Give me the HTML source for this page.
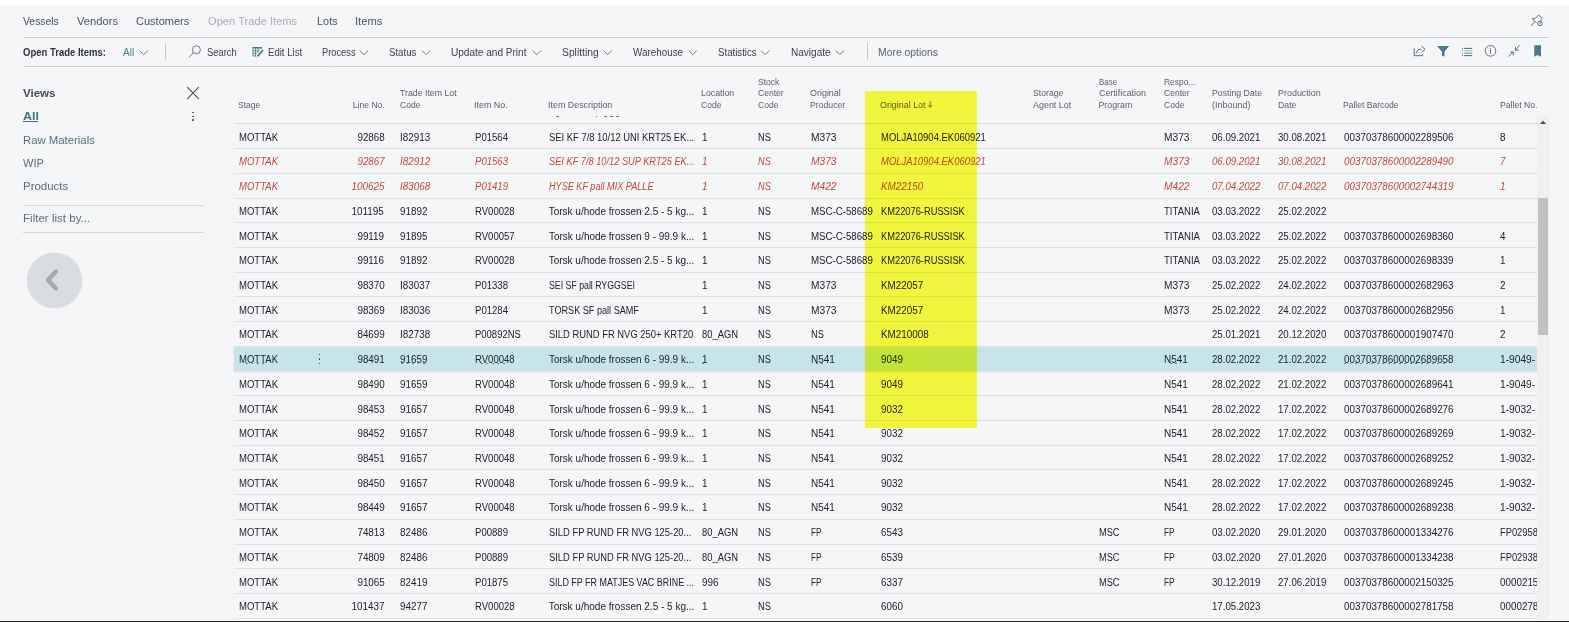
<!DOCTYPE html>
<html><head><meta charset="utf-8"><style>
html,body{margin:0;padding:0}
body{width:1569px;height:622px;overflow:hidden;background:#f5f6f8;position:relative;font-family:"Liberation Sans",sans-serif}
.t{position:absolute;white-space:nowrap;line-height:1.1172}
.r{position:absolute}
</style></head><body>
<div class="r" style="left:234px;top:345.88px;width:1303px;height:24.72px;background:#c6e4ea;box-shadow:0 1px 2px rgba(0,0,0,0.13);"></div>
<div class="r" style="left:234px;top:617.80px;width:1303px;height:1px;background:#dfe1e4"></div>
<div class="r" style="left:234px;top:593.08px;width:1303px;height:1px;background:#dfe1e4"></div>
<div class="r" style="left:234px;top:568.36px;width:1303px;height:1px;background:#dfe1e4"></div>
<div class="r" style="left:234px;top:543.64px;width:1303px;height:1px;background:#dfe1e4"></div>
<div class="r" style="left:234px;top:518.92px;width:1303px;height:1px;background:#dfe1e4"></div>
<div class="r" style="left:234px;top:494.20px;width:1303px;height:1px;background:#dfe1e4"></div>
<div class="r" style="left:234px;top:469.48px;width:1303px;height:1px;background:#dfe1e4"></div>
<div class="r" style="left:234px;top:444.76px;width:1303px;height:1px;background:#dfe1e4"></div>
<div class="r" style="left:234px;top:420.04px;width:1303px;height:1px;background:#dfe1e4"></div>
<div class="r" style="left:234px;top:395.32px;width:1303px;height:1px;background:#dfe1e4"></div>
<div class="r" style="left:234px;top:370.60px;width:1303px;height:1px;background:#dfe1e4"></div>
<div class="r" style="left:0px;top:0px;width:1569px;height:6px;background:#ffffff;"></div>
<div class="r" style="left:234px;top:345.88px;width:1303px;height:1px;background:#dfe1e4"></div>
<div class="r" style="left:234px;top:321.16px;width:1303px;height:1px;background:#dfe1e4"></div>
<div class="r" style="left:234px;top:296.44px;width:1303px;height:1px;background:#dfe1e4"></div>
<div class="r" style="left:234px;top:271.72px;width:1303px;height:1px;background:#dfe1e4"></div>
<div class="r" style="left:234px;top:247.00px;width:1303px;height:1px;background:#dfe1e4"></div>
<div class="r" style="left:234px;top:222.28px;width:1303px;height:1px;background:#dfe1e4"></div>
<div class="r" style="left:234px;top:197.56px;width:1303px;height:1px;background:#dfe1e4"></div>
<div class="r" style="left:234px;top:172.84px;width:1303px;height:1px;background:#dfe1e4"></div>
<div class="r" style="left:234px;top:148.12px;width:1303px;height:1px;background:#dfe1e4"></div>
<div class="t" style="left:23.00px;top:14.77px;font-size:11.3px;color:#4c5360;transform:scaleX(0.919);transform-origin:0 0;">Vessels</div>
<div class="t" style="left:76.50px;top:14.77px;font-size:11.3px;color:#4c5360;transform:scaleX(0.992);transform-origin:0 0;">Vendors</div>
<div class="t" style="left:135.80px;top:14.77px;font-size:11.3px;color:#4c5360;transform:scaleX(0.975);transform-origin:0 0;">Customers</div>
<div class="t" style="left:208.10px;top:14.77px;font-size:11.3px;color:#a9adb4;transform:scaleX(0.986);transform-origin:0 0;">Open Trade Items</div>
<div class="t" style="left:316.50px;top:14.77px;font-size:11.3px;color:#4c5360;transform:scaleX(0.967);transform-origin:0 0;">Lots</div>
<div class="t" style="left:355.30px;top:14.77px;font-size:11.3px;color:#4c5360;transform:scaleX(0.995);transform-origin:0 0;">Items</div>
<div class="r" style="left:23px;top:37px;width:1526px;height:1px;background:#cdd0d5;"></div>
<div class="t" style="left:23.00px;top:46.95px;font-size:10px;color:#2f333a;font-weight:bold;transform:scaleX(0.950);transform-origin:0 0;">Open Trade Items:</div>
<div class="t" style="left:123.00px;top:46.95px;font-size:10px;color:#4e7f8a;transform:scaleX(1.017);transform-origin:0 0;">All</div>
<div class="r" style="left:165px;top:43px;width:1px;height:17px;background:#c4c7cc;"></div>
<div class="t" style="left:206.50px;top:46.95px;font-size:10px;color:#3b3f47;transform:scaleX(0.935);transform-origin:0 0;">Search</div>
<div class="t" style="left:267.50px;top:46.95px;font-size:10px;color:#3b3f47;transform:scaleX(0.958);transform-origin:0 0;">Edit List</div>
<div class="t" style="left:321.60px;top:46.95px;font-size:10px;color:#3b3f47;transform:scaleX(0.928);transform-origin:0 0;">Process</div>
<div class="t" style="left:389.40px;top:46.95px;font-size:10px;color:#3b3f47;transform:scaleX(0.965);transform-origin:0 0;">Status</div>
<div class="t" style="left:451.10px;top:46.95px;font-size:10px;color:#3b3f47;transform:scaleX(1.006);transform-origin:0 0;">Update and Print</div>
<div class="t" style="left:561.80px;top:46.95px;font-size:10px;color:#3b3f47;transform:scaleX(1.031);transform-origin:0 0;">Splitting</div>
<div class="t" style="left:633.10px;top:46.95px;font-size:10px;color:#3b3f47;transform:scaleX(0.987);transform-origin:0 0;">Warehouse</div>
<div class="t" style="left:717.80px;top:46.95px;font-size:10px;color:#3b3f47;transform:scaleX(0.966);transform-origin:0 0;">Statistics</div>
<div class="t" style="left:791.40px;top:46.95px;font-size:10px;color:#3b3f47;transform:scaleX(1.005);transform-origin:0 0;">Navigate</div>
<div class="r" style="left:867px;top:43px;width:1px;height:17px;background:#c4c7cc;"></div>
<div class="t" style="left:878.40px;top:46.95px;font-size:10px;color:#5c6370;transform:scaleX(1.038);transform-origin:0 0;">More options</div>
<div class="r" style="left:23px;top:66px;width:1526px;height:1px;background:#cdd0d5;"></div>
<div class="t" style="left:23.00px;top:86.66px;font-size:11.2px;color:#474c56;font-weight:bold;transform:scaleX(1.030);transform-origin:0 0;">Views</div>
<div class="t" style="left:23.00px;top:110.06px;font-size:11.2px;color:#3e7380;font-weight:bold;transform:scaleX(1.120);transform-origin:0 0;">All</div>
<div class="r" style="left:23px;top:121px;width:14.5px;height:1.2px;background:#3e7380;"></div>
<div class="t" style="left:23.00px;top:133.58px;font-size:11.4px;color:#557079;transform:scaleX(0.996);transform-origin:0 0;">Raw Materials</div>
<div class="t" style="left:23.00px;top:156.78px;font-size:11.4px;color:#557079;transform:scaleX(0.969);transform-origin:0 0;">WIP</div>
<div class="t" style="left:23.00px;top:179.78px;font-size:11.4px;color:#557079;transform:scaleX(1.006);transform-origin:0 0;">Products</div>
<div class="r" style="left:23px;top:205px;width:181px;height:1px;background:#d3d6da;"></div>
<div class="t" style="left:23.00px;top:212.28px;font-size:11.4px;color:#557079;transform:scaleX(1.015);transform-origin:0 0;">Filter list by...</div>
<div class="r" style="left:23px;top:232px;width:181px;height:1px;background:#d3d6da;"></div>
<svg class="r" style="left:186px;top:86px" width="14" height="14"><path d="M1.2 1.2L12.8 12.8M12.8 1.2L1.2 12.8" stroke="#4a4f58" stroke-width="1.1" fill="none"/></svg>
<div class="r" style="left:192.3px;top:111.6px;width:1.5px;height:1.5px;background:#454a52;border-radius:50%;"></div>
<div class="r" style="left:192.3px;top:115.5px;width:1.5px;height:1.5px;background:#454a52;border-radius:50%;"></div>
<div class="r" style="left:192.3px;top:119.4px;width:1.5px;height:1.5px;background:#454a52;border-radius:50%;"></div>
<div class="r" style="left:27px;top:252.5px;width:55px;height:55px;border-radius:50%;background:#d9dce0;box-shadow:0 0 1.5px rgba(0,0,0,0.12)"></div>
<svg class="r" style="left:35px;top:260px" width="40" height="40"><path d="M21 11.5L13 20L21 28.5" stroke="#a8aaad" stroke-width="4.4" stroke-linecap="round" stroke-linejoin="round" fill="none"/></svg>
<div class="t" style="left:238.30px;top:100.53px;font-size:8.8px;color:#5a5e66;transform:scaleX(0.961);transform-origin:0 0;">Stage</div>
<div class="t" style="left:351.82px;top:100.53px;font-size:8.8px;color:#5a5e66;transform:scaleX(0.976);transform-origin:100% 0;">Line No.</div>
<div class="t" style="left:399.70px;top:89.13px;font-size:8.8px;color:#5a5e66;transform:scaleX(0.995);transform-origin:0 0;">Trade Item Lot</div>
<div class="t" style="left:399.70px;top:100.53px;font-size:8.8px;color:#5a5e66;transform:scaleX(0.971);transform-origin:0 0;">Code</div>
<div class="t" style="left:473.90px;top:100.53px;font-size:8.8px;color:#5a5e66;transform:scaleX(1.016);transform-origin:0 0;">Item No.</div>
<div class="t" style="left:548.40px;top:100.53px;font-size:8.8px;color:#5a5e66;transform:scaleX(1.012);transform-origin:0 0;">Item Description</div>
<div class="t" style="left:700.80px;top:89.13px;font-size:8.8px;color:#5a5e66;transform:scaleX(0.999);transform-origin:0 0;">Location</div>
<div class="t" style="left:700.80px;top:100.53px;font-size:8.8px;color:#5a5e66;transform:scaleX(0.971);transform-origin:0 0;">Code</div>
<div class="t" style="left:757.70px;top:77.73px;font-size:8.8px;color:#5a5e66;transform:scaleX(0.969);transform-origin:0 0;">Stock</div>
<div class="t" style="left:757.70px;top:89.13px;font-size:8.8px;color:#5a5e66;transform:scaleX(0.974);transform-origin:0 0;">Center</div>
<div class="t" style="left:757.70px;top:100.53px;font-size:8.8px;color:#5a5e66;transform:scaleX(0.971);transform-origin:0 0;">Code</div>
<div class="t" style="left:810.30px;top:89.13px;font-size:8.8px;color:#5a5e66;transform:scaleX(1.016);transform-origin:0 0;">Original</div>
<div class="t" style="left:810.30px;top:100.53px;font-size:8.8px;color:#5a5e66;transform:scaleX(0.986);transform-origin:0 0;">Producer</div>
<div class="t" style="left:879.60px;top:100.53px;font-size:8.8px;color:#5a5e66;transform:scaleX(1.012);transform-origin:0 0;">Original Lot</div>
<svg class="r" style="left:925px;top:99px" width="10" height="10" viewBox="925 99 10 10"><path d="M930.2 101V107M928.2 105.2L930.2 107.3L932.2 105.2" stroke="#6a6e75" stroke-width="0.9" fill="none"/></svg>
<div class="t" style="left:1032.60px;top:89.13px;font-size:8.8px;color:#5a5e66;transform:scaleX(0.987);transform-origin:0 0;">Storage</div>
<div class="t" style="left:1032.60px;top:100.53px;font-size:8.8px;color:#5a5e66;transform:scaleX(1.016);transform-origin:0 0;">Agent Lot</div>
<div class="t" style="left:1098.50px;top:77.73px;font-size:8.8px;color:#5a5e66;transform:scaleX(0.901);transform-origin:0 0;">Base</div>
<div class="t" style="left:1098.50px;top:89.13px;font-size:8.8px;color:#5a5e66;transform:scaleX(1.011);transform-origin:0 0;">Certification</div>
<div class="t" style="left:1098.50px;top:100.53px;font-size:8.8px;color:#5a5e66;transform:scaleX(1.000);transform-origin:0 0;">Program</div>
<div class="t" style="left:1163.50px;top:77.73px;font-size:8.8px;color:#5a5e66;transform:scaleX(0.956);transform-origin:0 0;">Respo...</div>
<div class="t" style="left:1163.50px;top:89.13px;font-size:8.8px;color:#5a5e66;transform:scaleX(0.974);transform-origin:0 0;">Center</div>
<div class="t" style="left:1163.50px;top:100.53px;font-size:8.8px;color:#5a5e66;transform:scaleX(0.971);transform-origin:0 0;">Code</div>
<div class="t" style="left:1211.80px;top:89.13px;font-size:8.8px;color:#5a5e66;transform:scaleX(0.993);transform-origin:0 0;">Posting Date</div>
<div class="t" style="left:1211.80px;top:100.53px;font-size:8.8px;color:#5a5e66;transform:scaleX(1.019);transform-origin:0 0;">(Inbound)</div>
<div class="t" style="left:1277.50px;top:89.13px;font-size:8.8px;color:#5a5e66;transform:scaleX(1.017);transform-origin:0 0;">Production</div>
<div class="t" style="left:1277.50px;top:100.53px;font-size:8.8px;color:#5a5e66;transform:scaleX(0.991);transform-origin:0 0;">Date</div>
<div class="t" style="left:1342.80px;top:100.53px;font-size:8.8px;color:#5a5e66;transform:scaleX(0.971);transform-origin:0 0;">Pallet Barcode</div>
<div class="t" style="left:1499.80px;top:100.53px;font-size:8.8px;color:#5a5e66;transform:scaleX(0.983);transform-origin:0 0;">Pallet No.</div>
<div class="r" style="left:234px;top:123.0px;width:1303px;height:1px;background:#dcdee2;"></div>
<div class="r" style="left:329.5px;top:66px;width:1px;height:49px;background:#eff0f2;"></div>
<div class="r" style="left:556.3px;top:116.1px;width:2.6px;height:1.3px;background:#6e7076;transform:skewX(-35deg)"></div>
<div class="r" style="left:596.0px;top:116.1px;width:1.2px;height:1.3px;background:#6e7076;transform:skewX(0deg)"></div>
<div class="r" style="left:603.6px;top:116.1px;width:2.6px;height:1.3px;background:#6e7076;transform:skewX(-35deg)"></div>
<div class="r" style="left:609.6px;top:116.1px;width:3.0px;height:1.3px;background:#6e7076;transform:skewX(-20deg)"></div>
<div class="r" style="left:615.6px;top:116.1px;width:3.0px;height:1.3px;background:#6e7076;transform:skewX(-20deg)"></div>
<div class="t" style="left:238.80px;top:131.65px;font-size:10px;color:#20242a;transform:scaleX(0.953);transform-origin:0 0;">MOTTAK</div>
<div class="t" style="left:356.79px;top:131.65px;font-size:10px;color:#20242a;transform:scaleX(0.985);transform-origin:100% 0;">92868</div>
<div class="t" style="left:400.30px;top:131.65px;font-size:10px;color:#20242a;transform:scaleX(0.985);transform-origin:0 0;">I82913</div>
<div class="t" style="left:474.60px;top:131.65px;font-size:10px;color:#20242a;transform:scaleX(0.958);transform-origin:0 0;">P01564</div>
<div class="t" style="left:548.70px;top:131.65px;font-size:10px;color:#20242a;transform:scaleX(0.941);transform-origin:0 0;">SEI KF 7/8 10/12 UNI KRT25 EK...</div>
<div class="t" style="left:701.80px;top:131.65px;font-size:10px;color:#20242a;transform:scaleX(0.985);transform-origin:0 0;">1</div>
<div class="t" style="left:758.30px;top:131.65px;font-size:10px;color:#20242a;transform:scaleX(0.921);transform-origin:0 0;">NS</div>
<div class="t" style="left:810.70px;top:131.65px;font-size:10px;color:#20242a;transform:scaleX(1.019);transform-origin:0 0;">M373</div>
<div class="t" style="left:880.60px;top:131.65px;font-size:10px;color:#20242a;transform:scaleX(0.947);transform-origin:0 0;">MOLJA10904.EK060921</div>
<div class="t" style="left:1164.20px;top:131.65px;font-size:10px;color:#20242a;transform:scaleX(1.019);transform-origin:0 0;">M373</div>
<div class="t" style="left:1212.40px;top:131.65px;font-size:10px;color:#20242a;transform:scaleX(0.966);transform-origin:0 0;">06.09.2021</div>
<div class="t" style="left:1278.00px;top:131.65px;font-size:10px;color:#20242a;transform:scaleX(0.966);transform-origin:0 0;">30.08.2021</div>
<div class="t" style="left:1343.50px;top:131.65px;font-size:10px;color:#20242a;transform:scaleX(0.985);transform-origin:0 0;">00370378600002289506</div>
<div class="t" style="left:1500.40px;top:131.65px;font-size:10px;color:#20242a;transform:scaleX(0.985);transform-origin:0 0;">8</div>
<div class="t" style="left:238.80px;top:156.37px;font-size:10px;color:#bd4a3a;font-style:italic;transform:scaleX(0.953);transform-origin:0 0;">MOTTAK</div>
<div class="t" style="left:356.79px;top:156.37px;font-size:10px;color:#bd4a3a;font-style:italic;transform:scaleX(0.985);transform-origin:100% 0;">92867</div>
<div class="t" style="left:400.30px;top:156.37px;font-size:10px;color:#bd4a3a;font-style:italic;transform:scaleX(0.985);transform-origin:0 0;">I82912</div>
<div class="t" style="left:474.60px;top:156.37px;font-size:10px;color:#bd4a3a;font-style:italic;transform:scaleX(0.958);transform-origin:0 0;">P01563</div>
<div class="t" style="left:548.70px;top:156.37px;font-size:10px;color:#bd4a3a;font-style:italic;transform:scaleX(0.926);transform-origin:0 0;">SEI KF 7/8 10/12 SUP KRT25 EK...</div>
<div class="t" style="left:701.80px;top:156.37px;font-size:10px;color:#bd4a3a;font-style:italic;transform:scaleX(0.985);transform-origin:0 0;">1</div>
<div class="t" style="left:758.30px;top:156.37px;font-size:10px;color:#bd4a3a;font-style:italic;transform:scaleX(0.921);transform-origin:0 0;">NS</div>
<div class="t" style="left:810.70px;top:156.37px;font-size:10px;color:#bd4a3a;font-style:italic;transform:scaleX(1.019);transform-origin:0 0;">M373</div>
<div class="t" style="left:880.60px;top:156.37px;font-size:10px;color:#bd4a3a;font-style:italic;transform:scaleX(0.947);transform-origin:0 0;">MOLJA10904.EK060921</div>
<div class="t" style="left:1164.20px;top:156.37px;font-size:10px;color:#bd4a3a;font-style:italic;transform:scaleX(1.019);transform-origin:0 0;">M373</div>
<div class="t" style="left:1212.40px;top:156.37px;font-size:10px;color:#bd4a3a;font-style:italic;transform:scaleX(0.966);transform-origin:0 0;">06.09.2021</div>
<div class="t" style="left:1278.00px;top:156.37px;font-size:10px;color:#bd4a3a;font-style:italic;transform:scaleX(0.966);transform-origin:0 0;">30.08.2021</div>
<div class="t" style="left:1343.50px;top:156.37px;font-size:10px;color:#bd4a3a;font-style:italic;transform:scaleX(0.985);transform-origin:0 0;">00370378600002289490</div>
<div class="t" style="left:1500.40px;top:156.37px;font-size:10px;color:#bd4a3a;font-style:italic;transform:scaleX(0.985);transform-origin:0 0;">7</div>
<div class="t" style="left:238.80px;top:181.09px;font-size:10px;color:#bd4a3a;font-style:italic;transform:scaleX(0.953);transform-origin:0 0;">MOTTAK</div>
<div class="t" style="left:351.23px;top:181.09px;font-size:10px;color:#bd4a3a;font-style:italic;transform:scaleX(0.985);transform-origin:100% 0;">100625</div>
<div class="t" style="left:400.30px;top:181.09px;font-size:10px;color:#bd4a3a;font-style:italic;transform:scaleX(0.985);transform-origin:0 0;">I83068</div>
<div class="t" style="left:474.60px;top:181.09px;font-size:10px;color:#bd4a3a;font-style:italic;transform:scaleX(0.958);transform-origin:0 0;">P01419</div>
<div class="t" style="left:548.70px;top:181.09px;font-size:10px;color:#bd4a3a;font-style:italic;transform:scaleX(0.911);transform-origin:0 0;">HYSE KF pall MIX PALLE</div>
<div class="t" style="left:701.80px;top:181.09px;font-size:10px;color:#bd4a3a;font-style:italic;transform:scaleX(0.985);transform-origin:0 0;">1</div>
<div class="t" style="left:758.30px;top:181.09px;font-size:10px;color:#bd4a3a;font-style:italic;transform:scaleX(0.921);transform-origin:0 0;">NS</div>
<div class="t" style="left:810.70px;top:181.09px;font-size:10px;color:#bd4a3a;font-style:italic;transform:scaleX(1.019);transform-origin:0 0;">M422</div>
<div class="t" style="left:880.60px;top:181.09px;font-size:10px;color:#bd4a3a;font-style:italic;transform:scaleX(0.988);transform-origin:0 0;">KM22150</div>
<div class="t" style="left:1164.20px;top:181.09px;font-size:10px;color:#bd4a3a;font-style:italic;transform:scaleX(1.019);transform-origin:0 0;">M422</div>
<div class="t" style="left:1212.40px;top:181.09px;font-size:10px;color:#bd4a3a;font-style:italic;transform:scaleX(0.966);transform-origin:0 0;">07.04.2022</div>
<div class="t" style="left:1278.00px;top:181.09px;font-size:10px;color:#bd4a3a;font-style:italic;transform:scaleX(0.966);transform-origin:0 0;">07.04.2022</div>
<div class="t" style="left:1343.50px;top:181.09px;font-size:10px;color:#bd4a3a;font-style:italic;transform:scaleX(0.985);transform-origin:0 0;">00370378600002744319</div>
<div class="t" style="left:1500.40px;top:181.09px;font-size:10px;color:#bd4a3a;font-style:italic;transform:scaleX(0.985);transform-origin:0 0;">1</div>
<div class="t" style="left:238.80px;top:205.81px;font-size:10px;color:#20242a;transform:scaleX(0.953);transform-origin:0 0;">MOTTAK</div>
<div class="t" style="left:351.23px;top:205.81px;font-size:10px;color:#20242a;transform:scaleX(0.985);transform-origin:100% 0;">101195</div>
<div class="t" style="left:400.30px;top:205.81px;font-size:10px;color:#20242a;transform:scaleX(0.985);transform-origin:0 0;">91892</div>
<div class="t" style="left:474.60px;top:205.81px;font-size:10px;color:#20242a;transform:scaleX(0.954);transform-origin:0 0;">RV00028</div>
<div class="t" style="left:548.70px;top:205.81px;font-size:10px;color:#20242a;transform:scaleX(1.000);transform-origin:0 0;">Torsk u/hode frossen 2.5 - 5 kg...</div>
<div class="t" style="left:701.80px;top:205.81px;font-size:10px;color:#20242a;transform:scaleX(0.985);transform-origin:0 0;">1</div>
<div class="t" style="left:758.30px;top:205.81px;font-size:10px;color:#20242a;transform:scaleX(0.921);transform-origin:0 0;">NS</div>
<div class="t" style="left:810.70px;top:205.81px;font-size:10px;color:#20242a;transform:scaleX(0.968);transform-origin:0 0;">MSC-C-58689</div>
<div class="t" style="left:880.60px;top:205.81px;font-size:10px;color:#20242a;transform:scaleX(0.931);transform-origin:0 0;">KM22076-RUSSISK</div>
<div class="t" style="left:1164.20px;top:205.81px;font-size:10px;color:#20242a;transform:scaleX(0.958);transform-origin:0 0;">TITANIA</div>
<div class="t" style="left:1212.40px;top:205.81px;font-size:10px;color:#20242a;transform:scaleX(0.966);transform-origin:0 0;">03.03.2022</div>
<div class="t" style="left:1278.00px;top:205.81px;font-size:10px;color:#20242a;transform:scaleX(0.966);transform-origin:0 0;">25.02.2022</div>
<div class="t" style="left:238.80px;top:230.53px;font-size:10px;color:#20242a;transform:scaleX(0.953);transform-origin:0 0;">MOTTAK</div>
<div class="t" style="left:356.79px;top:230.53px;font-size:10px;color:#20242a;transform:scaleX(0.985);transform-origin:100% 0;">99119</div>
<div class="t" style="left:400.30px;top:230.53px;font-size:10px;color:#20242a;transform:scaleX(0.985);transform-origin:0 0;">91895</div>
<div class="t" style="left:474.60px;top:230.53px;font-size:10px;color:#20242a;transform:scaleX(0.954);transform-origin:0 0;">RV00057</div>
<div class="t" style="left:548.70px;top:230.53px;font-size:10px;color:#20242a;transform:scaleX(0.997);transform-origin:0 0;">Torsk u/hode frossen 9 - 99.9 k...</div>
<div class="t" style="left:701.80px;top:230.53px;font-size:10px;color:#20242a;transform:scaleX(0.985);transform-origin:0 0;">1</div>
<div class="t" style="left:758.30px;top:230.53px;font-size:10px;color:#20242a;transform:scaleX(0.921);transform-origin:0 0;">NS</div>
<div class="t" style="left:810.70px;top:230.53px;font-size:10px;color:#20242a;transform:scaleX(0.968);transform-origin:0 0;">MSC-C-58689</div>
<div class="t" style="left:880.60px;top:230.53px;font-size:10px;color:#20242a;transform:scaleX(0.931);transform-origin:0 0;">KM22076-RUSSISK</div>
<div class="t" style="left:1164.20px;top:230.53px;font-size:10px;color:#20242a;transform:scaleX(0.958);transform-origin:0 0;">TITANIA</div>
<div class="t" style="left:1212.40px;top:230.53px;font-size:10px;color:#20242a;transform:scaleX(0.966);transform-origin:0 0;">03.03.2022</div>
<div class="t" style="left:1278.00px;top:230.53px;font-size:10px;color:#20242a;transform:scaleX(0.966);transform-origin:0 0;">25.02.2022</div>
<div class="t" style="left:1343.50px;top:230.53px;font-size:10px;color:#20242a;transform:scaleX(0.985);transform-origin:0 0;">00370378600002698360</div>
<div class="t" style="left:1500.40px;top:230.53px;font-size:10px;color:#20242a;transform:scaleX(0.985);transform-origin:0 0;">4</div>
<div class="t" style="left:238.80px;top:255.25px;font-size:10px;color:#20242a;transform:scaleX(0.953);transform-origin:0 0;">MOTTAK</div>
<div class="t" style="left:356.79px;top:255.25px;font-size:10px;color:#20242a;transform:scaleX(0.985);transform-origin:100% 0;">99116</div>
<div class="t" style="left:400.30px;top:255.25px;font-size:10px;color:#20242a;transform:scaleX(0.985);transform-origin:0 0;">91892</div>
<div class="t" style="left:474.60px;top:255.25px;font-size:10px;color:#20242a;transform:scaleX(0.954);transform-origin:0 0;">RV00028</div>
<div class="t" style="left:548.70px;top:255.25px;font-size:10px;color:#20242a;transform:scaleX(1.000);transform-origin:0 0;">Torsk u/hode frossen 2.5 - 5 kg...</div>
<div class="t" style="left:701.80px;top:255.25px;font-size:10px;color:#20242a;transform:scaleX(0.985);transform-origin:0 0;">1</div>
<div class="t" style="left:758.30px;top:255.25px;font-size:10px;color:#20242a;transform:scaleX(0.921);transform-origin:0 0;">NS</div>
<div class="t" style="left:810.70px;top:255.25px;font-size:10px;color:#20242a;transform:scaleX(0.968);transform-origin:0 0;">MSC-C-58689</div>
<div class="t" style="left:880.60px;top:255.25px;font-size:10px;color:#20242a;transform:scaleX(0.931);transform-origin:0 0;">KM22076-RUSSISK</div>
<div class="t" style="left:1164.20px;top:255.25px;font-size:10px;color:#20242a;transform:scaleX(0.958);transform-origin:0 0;">TITANIA</div>
<div class="t" style="left:1212.40px;top:255.25px;font-size:10px;color:#20242a;transform:scaleX(0.966);transform-origin:0 0;">03.03.2022</div>
<div class="t" style="left:1278.00px;top:255.25px;font-size:10px;color:#20242a;transform:scaleX(0.966);transform-origin:0 0;">25.02.2022</div>
<div class="t" style="left:1343.50px;top:255.25px;font-size:10px;color:#20242a;transform:scaleX(0.985);transform-origin:0 0;">00370378600002698339</div>
<div class="t" style="left:1500.40px;top:255.25px;font-size:10px;color:#20242a;transform:scaleX(0.985);transform-origin:0 0;">1</div>
<div class="t" style="left:238.80px;top:279.97px;font-size:10px;color:#20242a;transform:scaleX(0.953);transform-origin:0 0;">MOTTAK</div>
<div class="t" style="left:356.79px;top:279.97px;font-size:10px;color:#20242a;transform:scaleX(0.985);transform-origin:100% 0;">98370</div>
<div class="t" style="left:400.30px;top:279.97px;font-size:10px;color:#20242a;transform:scaleX(0.985);transform-origin:0 0;">I83037</div>
<div class="t" style="left:474.60px;top:279.97px;font-size:10px;color:#20242a;transform:scaleX(0.958);transform-origin:0 0;">P01338</div>
<div class="t" style="left:548.70px;top:279.97px;font-size:10px;color:#20242a;transform:scaleX(0.875);transform-origin:0 0;">SEI SF pall RYGGSEI</div>
<div class="t" style="left:701.80px;top:279.97px;font-size:10px;color:#20242a;transform:scaleX(0.985);transform-origin:0 0;">1</div>
<div class="t" style="left:758.30px;top:279.97px;font-size:10px;color:#20242a;transform:scaleX(0.921);transform-origin:0 0;">NS</div>
<div class="t" style="left:810.70px;top:279.97px;font-size:10px;color:#20242a;transform:scaleX(1.019);transform-origin:0 0;">M373</div>
<div class="t" style="left:880.60px;top:279.97px;font-size:10px;color:#20242a;transform:scaleX(0.988);transform-origin:0 0;">KM22057</div>
<div class="t" style="left:1164.20px;top:279.97px;font-size:10px;color:#20242a;transform:scaleX(1.019);transform-origin:0 0;">M373</div>
<div class="t" style="left:1212.40px;top:279.97px;font-size:10px;color:#20242a;transform:scaleX(0.966);transform-origin:0 0;">25.02.2022</div>
<div class="t" style="left:1278.00px;top:279.97px;font-size:10px;color:#20242a;transform:scaleX(0.966);transform-origin:0 0;">24.02.2022</div>
<div class="t" style="left:1343.50px;top:279.97px;font-size:10px;color:#20242a;transform:scaleX(0.985);transform-origin:0 0;">00370378600002682963</div>
<div class="t" style="left:1500.40px;top:279.97px;font-size:10px;color:#20242a;transform:scaleX(0.985);transform-origin:0 0;">2</div>
<div class="t" style="left:238.80px;top:304.69px;font-size:10px;color:#20242a;transform:scaleX(0.953);transform-origin:0 0;">MOTTAK</div>
<div class="t" style="left:356.79px;top:304.69px;font-size:10px;color:#20242a;transform:scaleX(0.985);transform-origin:100% 0;">98369</div>
<div class="t" style="left:400.30px;top:304.69px;font-size:10px;color:#20242a;transform:scaleX(0.985);transform-origin:0 0;">I83036</div>
<div class="t" style="left:474.60px;top:304.69px;font-size:10px;color:#20242a;transform:scaleX(0.958);transform-origin:0 0;">P01284</div>
<div class="t" style="left:548.70px;top:304.69px;font-size:10px;color:#20242a;transform:scaleX(0.911);transform-origin:0 0;">TORSK SF pall SAMF</div>
<div class="t" style="left:701.80px;top:304.69px;font-size:10px;color:#20242a;transform:scaleX(0.985);transform-origin:0 0;">1</div>
<div class="t" style="left:758.30px;top:304.69px;font-size:10px;color:#20242a;transform:scaleX(0.921);transform-origin:0 0;">NS</div>
<div class="t" style="left:810.70px;top:304.69px;font-size:10px;color:#20242a;transform:scaleX(1.019);transform-origin:0 0;">M373</div>
<div class="t" style="left:880.60px;top:304.69px;font-size:10px;color:#20242a;transform:scaleX(0.988);transform-origin:0 0;">KM22057</div>
<div class="t" style="left:1164.20px;top:304.69px;font-size:10px;color:#20242a;transform:scaleX(1.019);transform-origin:0 0;">M373</div>
<div class="t" style="left:1212.40px;top:304.69px;font-size:10px;color:#20242a;transform:scaleX(0.966);transform-origin:0 0;">25.02.2022</div>
<div class="t" style="left:1278.00px;top:304.69px;font-size:10px;color:#20242a;transform:scaleX(0.966);transform-origin:0 0;">24.02.2022</div>
<div class="t" style="left:1343.50px;top:304.69px;font-size:10px;color:#20242a;transform:scaleX(0.985);transform-origin:0 0;">00370378600002682956</div>
<div class="t" style="left:1500.40px;top:304.69px;font-size:10px;color:#20242a;transform:scaleX(0.985);transform-origin:0 0;">1</div>
<div class="t" style="left:238.80px;top:329.41px;font-size:10px;color:#20242a;transform:scaleX(0.953);transform-origin:0 0;">MOTTAK</div>
<div class="t" style="left:356.79px;top:329.41px;font-size:10px;color:#20242a;transform:scaleX(0.985);transform-origin:100% 0;">84699</div>
<div class="t" style="left:400.30px;top:329.41px;font-size:10px;color:#20242a;transform:scaleX(0.985);transform-origin:0 0;">I82738</div>
<div class="t" style="left:474.60px;top:329.41px;font-size:10px;color:#20242a;transform:scaleX(0.948);transform-origin:0 0;">P00892NS</div>
<div class="t" style="left:548.70px;top:329.41px;font-size:10px;color:#20242a;transform:scaleX(0.939);transform-origin:0 0;">SILD RUND FR NVG 250+ KRT20</div>
<div class="t" style="left:701.80px;top:329.41px;font-size:10px;color:#20242a;transform:scaleX(0.939);transform-origin:0 0;">80_AGN</div>
<div class="t" style="left:758.30px;top:329.41px;font-size:10px;color:#20242a;transform:scaleX(0.921);transform-origin:0 0;">NS</div>
<div class="t" style="left:810.70px;top:329.41px;font-size:10px;color:#20242a;transform:scaleX(0.921);transform-origin:0 0;">NS</div>
<div class="t" style="left:880.60px;top:329.41px;font-size:10px;color:#20242a;transform:scaleX(0.988);transform-origin:0 0;">KM210008</div>
<div class="t" style="left:1212.40px;top:329.41px;font-size:10px;color:#20242a;transform:scaleX(0.966);transform-origin:0 0;">25.01.2021</div>
<div class="t" style="left:1278.00px;top:329.41px;font-size:10px;color:#20242a;transform:scaleX(0.966);transform-origin:0 0;">20.12.2020</div>
<div class="t" style="left:1343.50px;top:329.41px;font-size:10px;color:#20242a;transform:scaleX(0.985);transform-origin:0 0;">00370378600001907470</div>
<div class="t" style="left:1500.40px;top:329.41px;font-size:10px;color:#20242a;transform:scaleX(0.985);transform-origin:0 0;">2</div>
<div class="t" style="left:238.80px;top:354.13px;font-size:10px;color:#20242a;transform:scaleX(0.953);transform-origin:0 0;">MOTTAK</div>
<div class="t" style="left:356.79px;top:354.13px;font-size:10px;color:#20242a;transform:scaleX(0.985);transform-origin:100% 0;">98491</div>
<div class="t" style="left:400.30px;top:354.13px;font-size:10px;color:#20242a;transform:scaleX(0.985);transform-origin:0 0;">91659</div>
<div class="t" style="left:474.60px;top:354.13px;font-size:10px;color:#20242a;transform:scaleX(0.954);transform-origin:0 0;">RV00048</div>
<div class="t" style="left:548.70px;top:354.13px;font-size:10px;color:#20242a;transform:scaleX(0.997);transform-origin:0 0;">Torsk u/hode frossen 6 - 99.9 k...</div>
<div class="t" style="left:701.80px;top:354.13px;font-size:10px;color:#20242a;transform:scaleX(0.985);transform-origin:0 0;">1</div>
<div class="t" style="left:758.30px;top:354.13px;font-size:10px;color:#20242a;transform:scaleX(0.921);transform-origin:0 0;">NS</div>
<div class="t" style="left:810.70px;top:354.13px;font-size:10px;color:#20242a;transform:scaleX(0.999);transform-origin:0 0;">N541</div>
<div class="t" style="left:880.60px;top:354.13px;font-size:10px;color:#20242a;transform:scaleX(0.985);transform-origin:0 0;">9049</div>
<div class="t" style="left:1164.20px;top:354.13px;font-size:10px;color:#20242a;transform:scaleX(0.999);transform-origin:0 0;">N541</div>
<div class="t" style="left:1212.40px;top:354.13px;font-size:10px;color:#20242a;transform:scaleX(0.966);transform-origin:0 0;">28.02.2022</div>
<div class="t" style="left:1278.00px;top:354.13px;font-size:10px;color:#20242a;transform:scaleX(0.966);transform-origin:0 0;">21.02.2022</div>
<div class="t" style="left:1343.50px;top:354.13px;font-size:10px;color:#20242a;transform:scaleX(0.985);transform-origin:0 0;">00370378600002689658</div>
<div class="t" style="left:1500.40px;top:354.13px;font-size:10px;color:#20242a;transform:scaleX(1.021);transform-origin:0 0;">1-9049-</div>
<div class="r" style="left:246px;top:363.38px;width:18px;height:1px;background:repeating-linear-gradient(90deg,rgba(40,44,52,0.55) 0 1.6px,transparent 1.6px 5.5px)"></div>
<div class="r" style="left:400.5px;top:363.38px;width:24px;height:1px;background:repeating-linear-gradient(90deg,rgba(40,44,52,0.55) 0 1.6px,transparent 1.6px 5.5px)"></div>
<div class="r" style="left:481px;top:363.38px;width:24px;height:1px;background:repeating-linear-gradient(90deg,rgba(40,44,52,0.55) 0 1.6px,transparent 1.6px 5.5px)"></div>
<div class="r" style="left:701.8px;top:363.38px;width:4px;height:1px;background:repeating-linear-gradient(90deg,rgba(40,44,52,0.55) 0 1.6px,transparent 1.6px 5.5px)"></div>
<div class="r" style="left:816px;top:363.38px;width:10px;height:1px;background:repeating-linear-gradient(90deg,rgba(40,44,52,0.55) 0 1.6px,transparent 1.6px 5.5px)"></div>
<div class="r" style="left:1170px;top:363.38px;width:10px;height:1px;background:repeating-linear-gradient(90deg,rgba(40,44,52,0.55) 0 1.6px,transparent 1.6px 5.5px)"></div>
<div class="r" style="left:1344px;top:363.38px;width:104px;height:1px;background:repeating-linear-gradient(90deg,rgba(40,44,52,0.55) 0 1.6px,transparent 1.6px 5.5px)"></div>
<div class="r" style="left:318.5px;top:353.85px;width:1.5px;height:1.5px;background:#2e3240;border-radius:50%;"></div>
<div class="r" style="left:318.5px;top:358.25px;width:1.5px;height:1.5px;background:#2e3240;border-radius:50%;"></div>
<div class="r" style="left:318.5px;top:362.55px;width:1.5px;height:1.5px;background:#2e3240;border-radius:50%;"></div>
<div class="t" style="left:238.80px;top:378.85px;font-size:10px;color:#20242a;transform:scaleX(0.953);transform-origin:0 0;">MOTTAK</div>
<div class="t" style="left:356.79px;top:378.85px;font-size:10px;color:#20242a;transform:scaleX(0.985);transform-origin:100% 0;">98490</div>
<div class="t" style="left:400.30px;top:378.85px;font-size:10px;color:#20242a;transform:scaleX(0.985);transform-origin:0 0;">91659</div>
<div class="t" style="left:474.60px;top:378.85px;font-size:10px;color:#20242a;transform:scaleX(0.954);transform-origin:0 0;">RV00048</div>
<div class="t" style="left:548.70px;top:378.85px;font-size:10px;color:#20242a;transform:scaleX(0.997);transform-origin:0 0;">Torsk u/hode frossen 6 - 99.9 k...</div>
<div class="t" style="left:701.80px;top:378.85px;font-size:10px;color:#20242a;transform:scaleX(0.985);transform-origin:0 0;">1</div>
<div class="t" style="left:758.30px;top:378.85px;font-size:10px;color:#20242a;transform:scaleX(0.921);transform-origin:0 0;">NS</div>
<div class="t" style="left:810.70px;top:378.85px;font-size:10px;color:#20242a;transform:scaleX(0.999);transform-origin:0 0;">N541</div>
<div class="t" style="left:880.60px;top:378.85px;font-size:10px;color:#20242a;transform:scaleX(0.985);transform-origin:0 0;">9049</div>
<div class="t" style="left:1164.20px;top:378.85px;font-size:10px;color:#20242a;transform:scaleX(0.999);transform-origin:0 0;">N541</div>
<div class="t" style="left:1212.40px;top:378.85px;font-size:10px;color:#20242a;transform:scaleX(0.966);transform-origin:0 0;">28.02.2022</div>
<div class="t" style="left:1278.00px;top:378.85px;font-size:10px;color:#20242a;transform:scaleX(0.966);transform-origin:0 0;">21.02.2022</div>
<div class="t" style="left:1343.50px;top:378.85px;font-size:10px;color:#20242a;transform:scaleX(0.985);transform-origin:0 0;">00370378600002689641</div>
<div class="t" style="left:1500.40px;top:378.85px;font-size:10px;color:#20242a;transform:scaleX(1.021);transform-origin:0 0;">1-9049-</div>
<div class="t" style="left:238.80px;top:403.57px;font-size:10px;color:#20242a;transform:scaleX(0.953);transform-origin:0 0;">MOTTAK</div>
<div class="t" style="left:356.79px;top:403.57px;font-size:10px;color:#20242a;transform:scaleX(0.985);transform-origin:100% 0;">98453</div>
<div class="t" style="left:400.30px;top:403.57px;font-size:10px;color:#20242a;transform:scaleX(0.985);transform-origin:0 0;">91657</div>
<div class="t" style="left:474.60px;top:403.57px;font-size:10px;color:#20242a;transform:scaleX(0.954);transform-origin:0 0;">RV00048</div>
<div class="t" style="left:548.70px;top:403.57px;font-size:10px;color:#20242a;transform:scaleX(0.997);transform-origin:0 0;">Torsk u/hode frossen 6 - 99.9 k...</div>
<div class="t" style="left:701.80px;top:403.57px;font-size:10px;color:#20242a;transform:scaleX(0.985);transform-origin:0 0;">1</div>
<div class="t" style="left:758.30px;top:403.57px;font-size:10px;color:#20242a;transform:scaleX(0.921);transform-origin:0 0;">NS</div>
<div class="t" style="left:810.70px;top:403.57px;font-size:10px;color:#20242a;transform:scaleX(0.999);transform-origin:0 0;">N541</div>
<div class="t" style="left:880.60px;top:403.57px;font-size:10px;color:#20242a;transform:scaleX(0.985);transform-origin:0 0;">9032</div>
<div class="t" style="left:1164.20px;top:403.57px;font-size:10px;color:#20242a;transform:scaleX(0.999);transform-origin:0 0;">N541</div>
<div class="t" style="left:1212.40px;top:403.57px;font-size:10px;color:#20242a;transform:scaleX(0.966);transform-origin:0 0;">28.02.2022</div>
<div class="t" style="left:1278.00px;top:403.57px;font-size:10px;color:#20242a;transform:scaleX(0.966);transform-origin:0 0;">17.02.2022</div>
<div class="t" style="left:1343.50px;top:403.57px;font-size:10px;color:#20242a;transform:scaleX(0.985);transform-origin:0 0;">00370378600002689276</div>
<div class="t" style="left:1500.40px;top:403.57px;font-size:10px;color:#20242a;transform:scaleX(1.021);transform-origin:0 0;">1-9032-</div>
<div class="t" style="left:238.80px;top:428.29px;font-size:10px;color:#20242a;transform:scaleX(0.953);transform-origin:0 0;">MOTTAK</div>
<div class="t" style="left:356.79px;top:428.29px;font-size:10px;color:#20242a;transform:scaleX(0.985);transform-origin:100% 0;">98452</div>
<div class="t" style="left:400.30px;top:428.29px;font-size:10px;color:#20242a;transform:scaleX(0.985);transform-origin:0 0;">91657</div>
<div class="t" style="left:474.60px;top:428.29px;font-size:10px;color:#20242a;transform:scaleX(0.954);transform-origin:0 0;">RV00048</div>
<div class="t" style="left:548.70px;top:428.29px;font-size:10px;color:#20242a;transform:scaleX(0.997);transform-origin:0 0;">Torsk u/hode frossen 6 - 99.9 k...</div>
<div class="t" style="left:701.80px;top:428.29px;font-size:10px;color:#20242a;transform:scaleX(0.985);transform-origin:0 0;">1</div>
<div class="t" style="left:758.30px;top:428.29px;font-size:10px;color:#20242a;transform:scaleX(0.921);transform-origin:0 0;">NS</div>
<div class="t" style="left:810.70px;top:428.29px;font-size:10px;color:#20242a;transform:scaleX(0.999);transform-origin:0 0;">N541</div>
<div class="t" style="left:880.60px;top:428.29px;font-size:10px;color:#20242a;transform:scaleX(0.985);transform-origin:0 0;">9032</div>
<div class="t" style="left:1164.20px;top:428.29px;font-size:10px;color:#20242a;transform:scaleX(0.999);transform-origin:0 0;">N541</div>
<div class="t" style="left:1212.40px;top:428.29px;font-size:10px;color:#20242a;transform:scaleX(0.966);transform-origin:0 0;">28.02.2022</div>
<div class="t" style="left:1278.00px;top:428.29px;font-size:10px;color:#20242a;transform:scaleX(0.966);transform-origin:0 0;">17.02.2022</div>
<div class="t" style="left:1343.50px;top:428.29px;font-size:10px;color:#20242a;transform:scaleX(0.985);transform-origin:0 0;">00370378600002689269</div>
<div class="t" style="left:1500.40px;top:428.29px;font-size:10px;color:#20242a;transform:scaleX(1.021);transform-origin:0 0;">1-9032-</div>
<div class="t" style="left:238.80px;top:453.01px;font-size:10px;color:#20242a;transform:scaleX(0.953);transform-origin:0 0;">MOTTAK</div>
<div class="t" style="left:356.79px;top:453.01px;font-size:10px;color:#20242a;transform:scaleX(0.985);transform-origin:100% 0;">98451</div>
<div class="t" style="left:400.30px;top:453.01px;font-size:10px;color:#20242a;transform:scaleX(0.985);transform-origin:0 0;">91657</div>
<div class="t" style="left:474.60px;top:453.01px;font-size:10px;color:#20242a;transform:scaleX(0.954);transform-origin:0 0;">RV00048</div>
<div class="t" style="left:548.70px;top:453.01px;font-size:10px;color:#20242a;transform:scaleX(0.997);transform-origin:0 0;">Torsk u/hode frossen 6 - 99.9 k...</div>
<div class="t" style="left:701.80px;top:453.01px;font-size:10px;color:#20242a;transform:scaleX(0.985);transform-origin:0 0;">1</div>
<div class="t" style="left:758.30px;top:453.01px;font-size:10px;color:#20242a;transform:scaleX(0.921);transform-origin:0 0;">NS</div>
<div class="t" style="left:810.70px;top:453.01px;font-size:10px;color:#20242a;transform:scaleX(0.999);transform-origin:0 0;">N541</div>
<div class="t" style="left:880.60px;top:453.01px;font-size:10px;color:#20242a;transform:scaleX(0.985);transform-origin:0 0;">9032</div>
<div class="t" style="left:1164.20px;top:453.01px;font-size:10px;color:#20242a;transform:scaleX(0.999);transform-origin:0 0;">N541</div>
<div class="t" style="left:1212.40px;top:453.01px;font-size:10px;color:#20242a;transform:scaleX(0.966);transform-origin:0 0;">28.02.2022</div>
<div class="t" style="left:1278.00px;top:453.01px;font-size:10px;color:#20242a;transform:scaleX(0.966);transform-origin:0 0;">17.02.2022</div>
<div class="t" style="left:1343.50px;top:453.01px;font-size:10px;color:#20242a;transform:scaleX(0.985);transform-origin:0 0;">00370378600002689252</div>
<div class="t" style="left:1500.40px;top:453.01px;font-size:10px;color:#20242a;transform:scaleX(1.021);transform-origin:0 0;">1-9032-</div>
<div class="t" style="left:238.80px;top:477.73px;font-size:10px;color:#20242a;transform:scaleX(0.953);transform-origin:0 0;">MOTTAK</div>
<div class="t" style="left:356.79px;top:477.73px;font-size:10px;color:#20242a;transform:scaleX(0.985);transform-origin:100% 0;">98450</div>
<div class="t" style="left:400.30px;top:477.73px;font-size:10px;color:#20242a;transform:scaleX(0.985);transform-origin:0 0;">91657</div>
<div class="t" style="left:474.60px;top:477.73px;font-size:10px;color:#20242a;transform:scaleX(0.954);transform-origin:0 0;">RV00048</div>
<div class="t" style="left:548.70px;top:477.73px;font-size:10px;color:#20242a;transform:scaleX(0.997);transform-origin:0 0;">Torsk u/hode frossen 6 - 99.9 k...</div>
<div class="t" style="left:701.80px;top:477.73px;font-size:10px;color:#20242a;transform:scaleX(0.985);transform-origin:0 0;">1</div>
<div class="t" style="left:758.30px;top:477.73px;font-size:10px;color:#20242a;transform:scaleX(0.921);transform-origin:0 0;">NS</div>
<div class="t" style="left:810.70px;top:477.73px;font-size:10px;color:#20242a;transform:scaleX(0.999);transform-origin:0 0;">N541</div>
<div class="t" style="left:880.60px;top:477.73px;font-size:10px;color:#20242a;transform:scaleX(0.985);transform-origin:0 0;">9032</div>
<div class="t" style="left:1164.20px;top:477.73px;font-size:10px;color:#20242a;transform:scaleX(0.999);transform-origin:0 0;">N541</div>
<div class="t" style="left:1212.40px;top:477.73px;font-size:10px;color:#20242a;transform:scaleX(0.966);transform-origin:0 0;">28.02.2022</div>
<div class="t" style="left:1278.00px;top:477.73px;font-size:10px;color:#20242a;transform:scaleX(0.966);transform-origin:0 0;">17.02.2022</div>
<div class="t" style="left:1343.50px;top:477.73px;font-size:10px;color:#20242a;transform:scaleX(0.985);transform-origin:0 0;">00370378600002689245</div>
<div class="t" style="left:1500.40px;top:477.73px;font-size:10px;color:#20242a;transform:scaleX(1.021);transform-origin:0 0;">1-9032-</div>
<div class="t" style="left:238.80px;top:502.45px;font-size:10px;color:#20242a;transform:scaleX(0.953);transform-origin:0 0;">MOTTAK</div>
<div class="t" style="left:356.79px;top:502.45px;font-size:10px;color:#20242a;transform:scaleX(0.985);transform-origin:100% 0;">98449</div>
<div class="t" style="left:400.30px;top:502.45px;font-size:10px;color:#20242a;transform:scaleX(0.985);transform-origin:0 0;">91657</div>
<div class="t" style="left:474.60px;top:502.45px;font-size:10px;color:#20242a;transform:scaleX(0.954);transform-origin:0 0;">RV00048</div>
<div class="t" style="left:548.70px;top:502.45px;font-size:10px;color:#20242a;transform:scaleX(0.997);transform-origin:0 0;">Torsk u/hode frossen 6 - 99.9 k...</div>
<div class="t" style="left:701.80px;top:502.45px;font-size:10px;color:#20242a;transform:scaleX(0.985);transform-origin:0 0;">1</div>
<div class="t" style="left:758.30px;top:502.45px;font-size:10px;color:#20242a;transform:scaleX(0.921);transform-origin:0 0;">NS</div>
<div class="t" style="left:810.70px;top:502.45px;font-size:10px;color:#20242a;transform:scaleX(0.999);transform-origin:0 0;">N541</div>
<div class="t" style="left:880.60px;top:502.45px;font-size:10px;color:#20242a;transform:scaleX(0.985);transform-origin:0 0;">9032</div>
<div class="t" style="left:1164.20px;top:502.45px;font-size:10px;color:#20242a;transform:scaleX(0.999);transform-origin:0 0;">N541</div>
<div class="t" style="left:1212.40px;top:502.45px;font-size:10px;color:#20242a;transform:scaleX(0.966);transform-origin:0 0;">28.02.2022</div>
<div class="t" style="left:1278.00px;top:502.45px;font-size:10px;color:#20242a;transform:scaleX(0.966);transform-origin:0 0;">17.02.2022</div>
<div class="t" style="left:1343.50px;top:502.45px;font-size:10px;color:#20242a;transform:scaleX(0.985);transform-origin:0 0;">00370378600002689238</div>
<div class="t" style="left:1500.40px;top:502.45px;font-size:10px;color:#20242a;transform:scaleX(1.021);transform-origin:0 0;">1-9032-</div>
<div class="t" style="left:238.80px;top:527.17px;font-size:10px;color:#20242a;transform:scaleX(0.953);transform-origin:0 0;">MOTTAK</div>
<div class="t" style="left:356.79px;top:527.17px;font-size:10px;color:#20242a;transform:scaleX(0.985);transform-origin:100% 0;">74813</div>
<div class="t" style="left:400.30px;top:527.17px;font-size:10px;color:#20242a;transform:scaleX(0.985);transform-origin:0 0;">82486</div>
<div class="t" style="left:474.60px;top:527.17px;font-size:10px;color:#20242a;transform:scaleX(0.958);transform-origin:0 0;">P00889</div>
<div class="t" style="left:548.70px;top:527.17px;font-size:10px;color:#20242a;transform:scaleX(0.936);transform-origin:0 0;">SILD FP RUND FR NVG 125-20...</div>
<div class="t" style="left:701.80px;top:527.17px;font-size:10px;color:#20242a;transform:scaleX(0.939);transform-origin:0 0;">80_AGN</div>
<div class="t" style="left:758.30px;top:527.17px;font-size:10px;color:#20242a;transform:scaleX(0.921);transform-origin:0 0;">NS</div>
<div class="t" style="left:810.70px;top:527.17px;font-size:10px;color:#20242a;transform:scaleX(0.815);transform-origin:0 0;">FP</div>
<div class="t" style="left:880.60px;top:527.17px;font-size:10px;color:#20242a;transform:scaleX(0.985);transform-origin:0 0;">6543</div>
<div class="t" style="left:1098.80px;top:527.17px;font-size:10px;color:#20242a;transform:scaleX(0.924);transform-origin:0 0;">MSC</div>
<div class="t" style="left:1164.20px;top:527.17px;font-size:10px;color:#20242a;transform:scaleX(0.815);transform-origin:0 0;">FP</div>
<div class="t" style="left:1212.40px;top:527.17px;font-size:10px;color:#20242a;transform:scaleX(0.966);transform-origin:0 0;">03.02.2020</div>
<div class="t" style="left:1278.00px;top:527.17px;font-size:10px;color:#20242a;transform:scaleX(0.966);transform-origin:0 0;">29.01.2020</div>
<div class="t" style="left:1343.50px;top:527.17px;font-size:10px;color:#20242a;transform:scaleX(0.985);transform-origin:0 0;">00370378600001334276</div>
<div class="t" style="left:1500.40px;top:527.17px;font-size:10px;color:#20242a;transform:scaleX(0.932);transform-origin:0 0;">FP02958</div>
<div class="t" style="left:238.80px;top:551.89px;font-size:10px;color:#20242a;transform:scaleX(0.953);transform-origin:0 0;">MOTTAK</div>
<div class="t" style="left:356.79px;top:551.89px;font-size:10px;color:#20242a;transform:scaleX(0.985);transform-origin:100% 0;">74809</div>
<div class="t" style="left:400.30px;top:551.89px;font-size:10px;color:#20242a;transform:scaleX(0.985);transform-origin:0 0;">82486</div>
<div class="t" style="left:474.60px;top:551.89px;font-size:10px;color:#20242a;transform:scaleX(0.958);transform-origin:0 0;">P00889</div>
<div class="t" style="left:548.70px;top:551.89px;font-size:10px;color:#20242a;transform:scaleX(0.936);transform-origin:0 0;">SILD FP RUND FR NVG 125-20...</div>
<div class="t" style="left:701.80px;top:551.89px;font-size:10px;color:#20242a;transform:scaleX(0.939);transform-origin:0 0;">80_AGN</div>
<div class="t" style="left:758.30px;top:551.89px;font-size:10px;color:#20242a;transform:scaleX(0.921);transform-origin:0 0;">NS</div>
<div class="t" style="left:810.70px;top:551.89px;font-size:10px;color:#20242a;transform:scaleX(0.815);transform-origin:0 0;">FP</div>
<div class="t" style="left:880.60px;top:551.89px;font-size:10px;color:#20242a;transform:scaleX(0.985);transform-origin:0 0;">6539</div>
<div class="t" style="left:1098.80px;top:551.89px;font-size:10px;color:#20242a;transform:scaleX(0.924);transform-origin:0 0;">MSC</div>
<div class="t" style="left:1164.20px;top:551.89px;font-size:10px;color:#20242a;transform:scaleX(0.815);transform-origin:0 0;">FP</div>
<div class="t" style="left:1212.40px;top:551.89px;font-size:10px;color:#20242a;transform:scaleX(0.966);transform-origin:0 0;">03.02.2020</div>
<div class="t" style="left:1278.00px;top:551.89px;font-size:10px;color:#20242a;transform:scaleX(0.966);transform-origin:0 0;">27.01.2020</div>
<div class="t" style="left:1343.50px;top:551.89px;font-size:10px;color:#20242a;transform:scaleX(0.985);transform-origin:0 0;">00370378600001334238</div>
<div class="t" style="left:1500.40px;top:551.89px;font-size:10px;color:#20242a;transform:scaleX(0.932);transform-origin:0 0;">FP02938</div>
<div class="t" style="left:238.80px;top:576.61px;font-size:10px;color:#20242a;transform:scaleX(0.953);transform-origin:0 0;">MOTTAK</div>
<div class="t" style="left:356.79px;top:576.61px;font-size:10px;color:#20242a;transform:scaleX(0.985);transform-origin:100% 0;">91065</div>
<div class="t" style="left:400.30px;top:576.61px;font-size:10px;color:#20242a;transform:scaleX(0.985);transform-origin:0 0;">82419</div>
<div class="t" style="left:474.60px;top:576.61px;font-size:10px;color:#20242a;transform:scaleX(0.958);transform-origin:0 0;">P01875</div>
<div class="t" style="left:548.70px;top:576.61px;font-size:10px;color:#20242a;transform:scaleX(0.894);transform-origin:0 0;">SILD FP FR MATJES VAC BRINE ...</div>
<div class="t" style="left:701.80px;top:576.61px;font-size:10px;color:#20242a;transform:scaleX(0.985);transform-origin:0 0;">996</div>
<div class="t" style="left:758.30px;top:576.61px;font-size:10px;color:#20242a;transform:scaleX(0.921);transform-origin:0 0;">NS</div>
<div class="t" style="left:810.70px;top:576.61px;font-size:10px;color:#20242a;transform:scaleX(0.815);transform-origin:0 0;">FP</div>
<div class="t" style="left:880.60px;top:576.61px;font-size:10px;color:#20242a;transform:scaleX(0.985);transform-origin:0 0;">6337</div>
<div class="t" style="left:1098.80px;top:576.61px;font-size:10px;color:#20242a;transform:scaleX(0.924);transform-origin:0 0;">MSC</div>
<div class="t" style="left:1164.20px;top:576.61px;font-size:10px;color:#20242a;transform:scaleX(0.815);transform-origin:0 0;">FP</div>
<div class="t" style="left:1212.40px;top:576.61px;font-size:10px;color:#20242a;transform:scaleX(0.966);transform-origin:0 0;">30.12.2019</div>
<div class="t" style="left:1278.00px;top:576.61px;font-size:10px;color:#20242a;transform:scaleX(0.966);transform-origin:0 0;">27.06.2019</div>
<div class="t" style="left:1343.50px;top:576.61px;font-size:10px;color:#20242a;transform:scaleX(0.985);transform-origin:0 0;">00370378600002150325</div>
<div class="t" style="left:1500.40px;top:576.61px;font-size:10px;color:#20242a;transform:scaleX(0.985);transform-origin:0 0;">0000215</div>
<div class="t" style="left:238.80px;top:601.33px;font-size:10px;color:#20242a;transform:scaleX(0.953);transform-origin:0 0;">MOTTAK</div>
<div class="t" style="left:351.23px;top:601.33px;font-size:10px;color:#20242a;transform:scaleX(0.985);transform-origin:100% 0;">101437</div>
<div class="t" style="left:400.30px;top:601.33px;font-size:10px;color:#20242a;transform:scaleX(0.985);transform-origin:0 0;">94277</div>
<div class="t" style="left:474.60px;top:601.33px;font-size:10px;color:#20242a;transform:scaleX(0.954);transform-origin:0 0;">RV00028</div>
<div class="t" style="left:548.70px;top:601.33px;font-size:10px;color:#20242a;transform:scaleX(1.000);transform-origin:0 0;">Torsk u/hode frossen 2.5 - 5 kg...</div>
<div class="t" style="left:701.80px;top:601.33px;font-size:10px;color:#20242a;transform:scaleX(0.985);transform-origin:0 0;">1</div>
<div class="t" style="left:758.30px;top:601.33px;font-size:10px;color:#20242a;transform:scaleX(0.921);transform-origin:0 0;">NS</div>
<div class="t" style="left:880.60px;top:601.33px;font-size:10px;color:#20242a;transform:scaleX(0.985);transform-origin:0 0;">6060</div>
<div class="t" style="left:1212.40px;top:601.33px;font-size:10px;color:#20242a;transform:scaleX(0.966);transform-origin:0 0;">17.05.2023</div>
<div class="t" style="left:1343.50px;top:601.33px;font-size:10px;color:#20242a;transform:scaleX(0.985);transform-origin:0 0;">00370378600002781758</div>
<div class="t" style="left:1500.40px;top:601.33px;font-size:10px;color:#20242a;transform:scaleX(0.985);transform-origin:0 0;">0000278</div>
<div class="r" style="left:1537px;top:116px;width:12px;height:504px;background:#f0f0f0;"></div>
<svg class="r" style="left:1539px;top:119px" width="8" height="6"><path d="M1 5L4 1.5L7 5Z" fill="#505050"/></svg>
<div class="r" style="left:1538px;top:198px;width:9.7px;height:137px;background:#c1c1c1;"></div>
<div class="r" style="left:1549px;top:66px;width:20px;height:554px;background:#f5f6f8;"></div>
<div class="r" style="left:865px;top:91px;width:112px;height:337px;background:#fcfe3e;mix-blend-mode:multiply"></div>
<div class="r" style="left:0px;top:620px;width:1569px;height:1px;background:#ffffff;"></div>
<div class="r" style="left:0px;top:621px;width:1569px;height:1px;background:#1d1f22;"></div>
<svg class="r" style="left:130px;top:45px" width="720" height="14" viewBox="130 45 720 14"><path d="M139.6 50.6L143.7 54.7L147.79999999999998 50.6" stroke="#6b6f76" stroke-width="0.9" fill="none"/><path d="M359.8 50.6L363.90000000000003 54.7L368.0 50.6" stroke="#6b6f76" stroke-width="0.9" fill="none"/><path d="M422.0 50.6L426.1 54.7L430.2 50.6" stroke="#6b6f76" stroke-width="0.9" fill="none"/><path d="M532.7 50.6L536.8000000000001 54.7L540.9000000000001 50.6" stroke="#6b6f76" stroke-width="0.9" fill="none"/><path d="M603.5 50.6L607.6 54.7L611.7 50.6" stroke="#6b6f76" stroke-width="0.9" fill="none"/><path d="M688.6 50.6L692.7 54.7L696.8000000000001 50.6" stroke="#6b6f76" stroke-width="0.9" fill="none"/><path d="M761.0 50.6L765.1 54.7L769.2 50.6" stroke="#6b6f76" stroke-width="0.9" fill="none"/><path d="M835.8 50.6L839.9 54.7L844.0 50.6" stroke="#6b6f76" stroke-width="0.9" fill="none"/></svg>
<svg class="r" style="left:186px;top:44px" width="16" height="16" viewBox="186 44 16 16"><circle cx="196.4" cy="49.8" r="4.0" stroke="#5d6672" stroke-width="0.85" fill="none"/><path d="M193.5 52.8L188.9 57.4" stroke="#5d6672" stroke-width="0.9" fill="none"/></svg>
<svg class="r" style="left:251px;top:45px" width="15" height="14" viewBox="251 45 15 14"><rect x="252.5" y="47" width="9.5" height="1.6" fill="#4b7a85"/><path d="M252.9 48.6V56.2M255.5 48.6V56.2M258 48.6V53M252.9 50.9H259.5M252.9 53.4H257M252.9 56H256" stroke="#4b7a85" stroke-width="0.8" fill="none"/><path d="M263 50L257.5 56.3" stroke="#4b7a85" stroke-width="1.8" fill="none"/><path d="M257 56.8L256.6 57.2" stroke="#4b7a85" stroke-width="1" /></svg>
<svg class="r" style="left:1412px;top:44px" width="16" height="14" viewBox="1412 44 16 14"><path d="M1414.2 48.3V55.7H1422.6V54.2" stroke="#4f6f78" stroke-width="1" fill="none"/><path d="M1416.3 53.2C1416.6 50.2 1418.6 49.2 1421.4 49.2" stroke="#5a6570" stroke-width="1" fill="none"/><path d="M1421.4 45.9L1425 49.3L1421.4 52.6" stroke="#5a6570" stroke-width="1" fill="none"/></svg>
<svg class="r" style="left:1436px;top:45px" width="14" height="13" viewBox="1436 45 14 13"><path d="M1437.1 46H1449.1L1444.5 51.7V56.2H1442V51.7Z" fill="#4b7a85"/></svg>
<svg class="r" style="left:1460px;top:46px" width="14" height="12" viewBox="1460 46 14 12"><rect x="1462" y="47.9" width="1" height="1" fill="#4f6f78" opacity="1"/><rect x="1464.2" y="47.85" width="8" height="1.1" fill="#4f7580" opacity="1"/><rect x="1462" y="50.3" width="1" height="1" fill="#4f6f78" opacity="0.45"/><rect x="1464.2" y="50.25" width="8" height="1.1" fill="#4f7580" opacity="0.45"/><rect x="1462" y="52.8" width="1" height="1" fill="#4f6f78" opacity="0.75"/><rect x="1464.2" y="52.75" width="8" height="1.1" fill="#4f7580" opacity="0.75"/><rect x="1462" y="55.1" width="1" height="1" fill="#4f6f78" opacity="1"/><rect x="1464.2" y="55.050000000000004" width="8" height="1.1" fill="#4f7580" opacity="1"/></svg>
<svg class="r" style="left:1484px;top:44px" width="14" height="14" viewBox="1484 44 14 14"><circle cx="1490.5" cy="50.85" r="5.3" stroke="#5a6470" stroke-width="0.9" fill="none"/><rect x="1490.05" y="47.9" width="0.9" height="0.9" fill="#5a4a70"/><rect x="1490.05" y="49.7" width="0.9" height="3.9" fill="#5a4a70"/></svg>
<svg class="r" style="left:1507px;top:44px" width="14" height="14" viewBox="1507 44 14 14"><path d="M1519.6 45.4L1515.6 49.8M1515.4 46.9V50.2H1518.8M1508.6 56.6L1512.8 52.4M1510 52.1H1513.3V55.5" stroke="#4f7580" stroke-width="1" fill="none"/></svg>
<svg class="r" style="left:1533px;top:44px" width="10" height="14" viewBox="1533 44 10 14"><path d="M1534.3 45.2H1541V56.7L1537.65 55.1L1534.3 56.7Z" fill="#4b7a85"/></svg>
<svg class="r" style="left:1529px;top:12px" width="16" height="16" viewBox="1529 12 16 16"><path d="M1532.3 18.8L1535.6 18.2L1538.7 14.9L1542.3 18.5L1539.6 21.2" stroke="#5a6470" stroke-width="0.9" fill="none"/><path d="M1532.3 18.8L1536.6 23.1" stroke="#5a6470" stroke-width="0.9" fill="none"/><path d="M1534.7 21.2L1531.4 25.8" stroke="#5a6470" stroke-width="0.9" fill="none"/><circle cx="1540.0" cy="23.4" r="2.2" stroke="#5a6470" stroke-width="0.9" fill="none"/><path d="M1538.6 24.8L1541.4 22" stroke="#5a6470" stroke-width="0.8"/></svg>
</body></html>
